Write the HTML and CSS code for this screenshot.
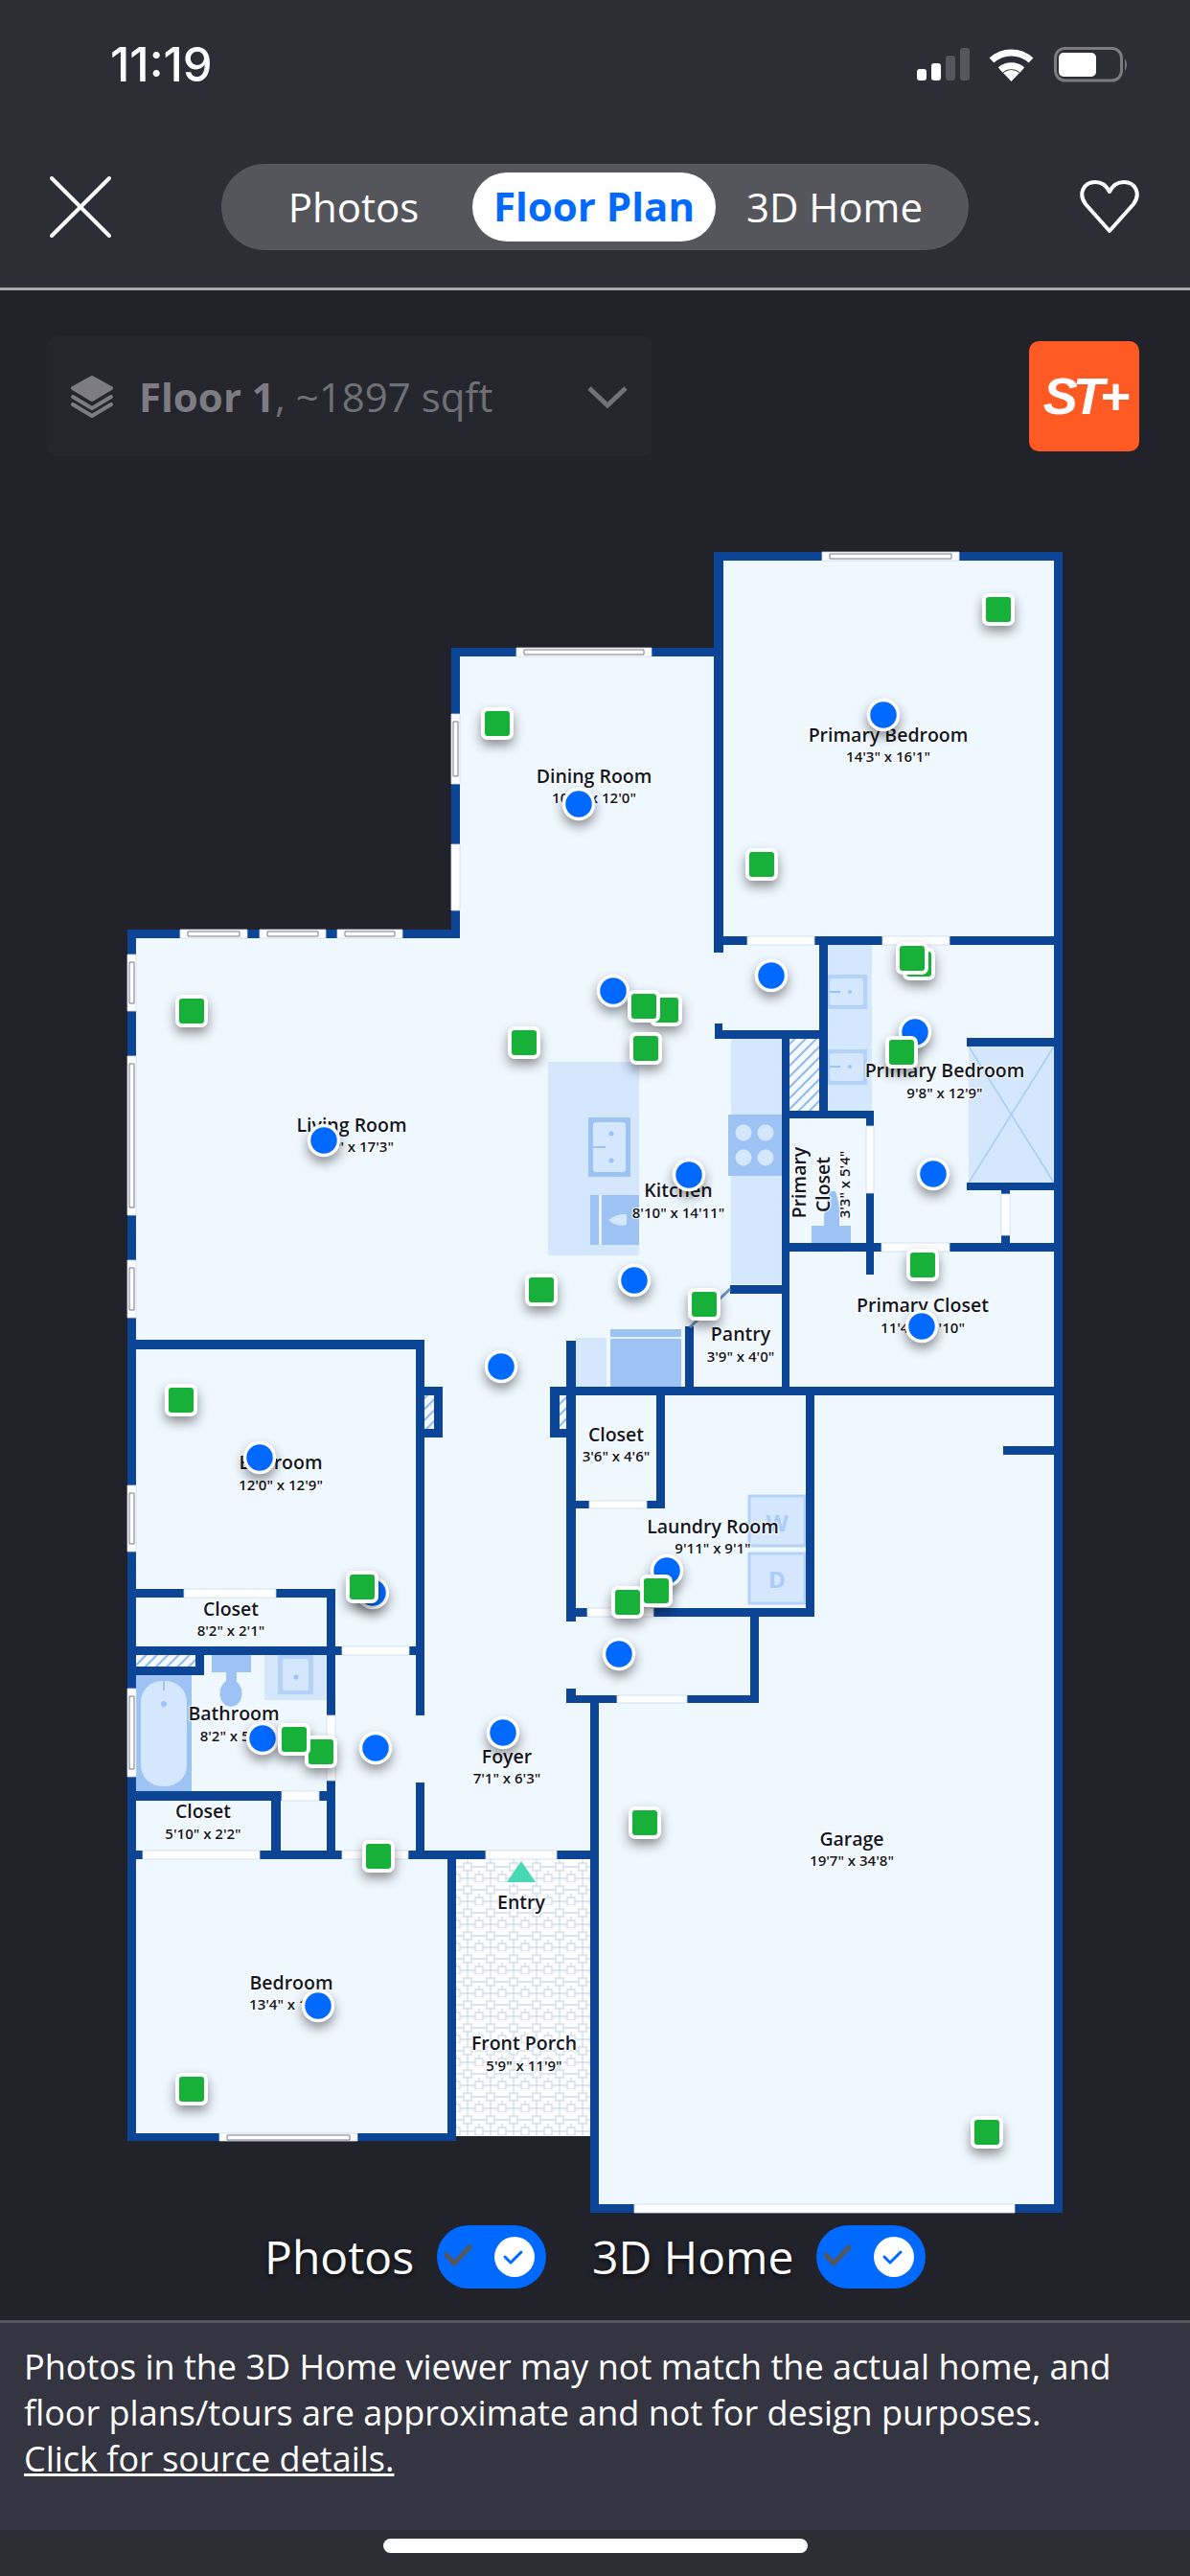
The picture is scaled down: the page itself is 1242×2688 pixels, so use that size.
FILE: index.html
```html
<!DOCTYPE html>
<html lang="en">
<head>
<meta charset="utf-8">
<title>Floor Plan</title>
<link rel="stylesheet" href="styles.css">
</head>
<body>
<div class="screen">
  <header class="top">
    <div class="status">
      <span class="time">11:19</span>
      <svg class="status-icons" width="221" height="40" viewBox="957 48 221 40">
        <rect class="s-on" x="957" y="72" width="10" height="12" rx="3"/>
        <rect class="s-on" x="972" y="66" width="10" height="18" rx="3"/>
        <rect class="s-off" x="987" y="58" width="10" height="26" rx="3"/>
        <rect class="s-off" x="1002" y="50" width="10" height="34" rx="3"/>
        <path class="wifi" d="M1035 63A30 30 0 0 1 1076 63"/>
        <path class="wifi" d="M1044 73A18 18 0 0 1 1067 73"/>
        <path class="s-on" d="M1055.500 85L1047 76Q1055.500 70 1064 76Z"/>
        <rect class="batt" x="1101.500" y="50.500" width="69" height="33.500" rx="10"/>
        <rect class="s-on" x="1105" y="55" width="39" height="25" rx="5"/>
        <path class="batt-cap" d="M1174 61Q1178 67.500 1174 74Z"/>
      </svg>
    </div>
    <nav class="nav">
      <svg class="nav-x" width="64" height="64" viewBox="0 0 64 64"><path d="M2 2L62 62M62 2L2 62"/></svg>
      <div class="seg">
        <span class="seg-item seg-left">Photos</span>
        <span class="seg-active">Floor Plan</span>
        <span class="seg-item seg-right">3D Home</span>
      </div>
      <svg class="nav-heart" width="64" height="58" viewBox="0 0 64 58"><path d="M32 54L7 26C-1 15 5 3 17 3C24 3 29 7 32 13C35 7 40 3 47 3C59 3 65 15 57 26Z"/></svg>
    </nav>
  </header>

  <main class="stage">
    <div class="stage-top">
      <div class="floor-select">
        <svg class="layers" width="46" height="46" viewBox="0 0 46 46">
          <path class="layers-top" d="M23 3L43 14L23 26L3 14Z"/>
          <path class="layers-line" d="M3 23L23 35L43 23"/>
          <path class="layers-line" d="M3 31L23 43L43 31"/>
        </svg>
        <span class="floor-text"><b>Floor 1</b>, ~1897 sqft</span>
        <svg class="floor-chev" width="42" height="24" viewBox="0 0 42 24"><path d="M2 3L21 21L40 3"/></svg>
      </div>
      <div class="badge">ST+</div>
    </div>

    <svg class="plan" width="1000" height="1745" viewBox="120 570 1000 1745">
      <defs>
        <pattern id="hatch" width="8" height="8" patternUnits="userSpaceOnUse" patternTransform="rotate(45)">
          <rect width="8" height="8" fill="#f4f9ff"/>
          <rect width="2" height="8" fill="#8fb8ee"/>
        </pattern>
        <pattern id="tile" x="476" y="1940" width="24" height="24" patternUnits="userSpaceOnUse">
          <rect width="24" height="24" fill="#fff"/>
          <path class="tile-line" d="M8 4H16V12H8ZM-4 16H4V24H-4ZM20 16H28V24H20ZM12 0V4M12 12V24M0 12V16M24 12V16M4 20H20M0 8H8M16 8H24"/>
        </pattern>
      </defs>

      <path class="floor" d="M133 970H471V676H745V576H1109V2309H616V2229H476V2234H133Z"/>
      <rect x="476" y="1940" width="140" height="289" fill="url(#tile)"/>

      <!-- fixtures -->
      <rect class="fx-light" x="572" y="1108" width="95" height="202"/>
      <rect class="fx-light" x="763" y="1084" width="53" height="256"/>
      <rect class="fx-light" x="864" y="986" width="46" height="173"/>
      <rect class="fx-light" x="1011" y="1092" width="89" height="142"/>
      <path class="fx-line" d="M1011 1092L1100 1234M1100 1092L1011 1234"/>
      <rect class="fx-dark" x="760" y="1163" width="56" height="64"/>
      <circle class="fx-hob" cx="776" cy="1182" r="8.500"/>
      <circle class="fx-hob" cx="799" cy="1182" r="8.500"/>
      <circle class="fx-hob" cx="776" cy="1208" r="8.500"/>
      <circle class="fx-hob" cx="799" cy="1208" r="8.500"/>
      <rect class="fx-dark" x="614" y="1166" width="44" height="62"/>
      <rect class="fx-inner" x="619" y="1171" width="34" height="52" rx="3"/>
      <path class="fx-mark" d="M619 1197H632"/>
      <circle class="fx-dot" cx="638" cy="1183" r="2.500"/>
      <circle class="fx-dot" cx="638" cy="1211" r="2.500"/>
      <rect class="fx-dark" x="616" y="1247" width="51" height="52"/>
      <rect class="fx-strip" x="625" y="1247" width="3" height="52"/>
      <path class="fx-inner" d="M635 1273Q644 1266 654 1267V1278Q644 1281 635 1273Z"/>
      <rect class="fx-dark" x="637" y="1387" width="74" height="60"/>
      <rect class="fx-strip" x="637" y="1395" width="74" height="2"/>
      <rect class="fx-light" x="600" y="1396" width="33" height="51"/>
      <rect class="fx-mid" x="864" y="1017" width="41" height="36"/>
      <rect class="fx-inner" x="866" y="1021" width="35" height="28" rx="3"/>
      <circle class="fx-dot" cx="887" cy="1035" r="2"/>
      <path class="fx-mark" d="M866 1035H877"/>
      <rect class="fx-mid" x="864" y="1095" width="41" height="37"/>
      <rect class="fx-inner" x="866" y="1099" width="35" height="29" rx="3"/>
      <circle class="fx-dot" cx="887" cy="1113" r="2"/>
      <path class="fx-mark" d="M866 1113H877"/>
      <path class="fx-dark" d="M847 1297V1279H860V1268Q862 1262 866 1243H872Q878 1262 876 1268V1279H888V1297Z"/>
      <rect class="fx-w" x="782" y="1561" width="58" height="52"/>
      <rect class="fx-w" x="782" y="1621" width="58" height="52"/>
      <text class="fx-letter" x="811" y="1598">W</text>
      <text class="fx-letter" x="811" y="1657">D</text>
      <rect class="fx-dark" x="142" y="1748" width="58" height="121"/>
      <rect class="fx-inner" x="147" y="1754" width="48" height="110" rx="22"/>
      <path class="fx-mark" d="M171 1754V1764"/>
      <circle class="fx-dot" cx="171" cy="1778" r="3"/>
      <rect class="fx-dark" x="221" y="1727" width="41" height="18"/>
      <rect class="fx-dark" x="236" y="1745" width="11" height="12"/>
      <ellipse class="fx-dark" cx="241" cy="1767" rx="11.500" ry="14"/>
      <rect class="fx-light" x="276" y="1727" width="65" height="47"/>
      <rect class="fx-mid" x="290" y="1727" width="37" height="41"/>
      <rect class="fx-inner" x="295" y="1731" width="27" height="33" rx="3"/>
      <circle class="fx-dot" cx="309" cy="1750" r="2.500"/>

      <!-- hatching -->
      <rect x="824" y="1084" width="31" height="75" fill="url(#hatch)"/>
      <rect x="142" y="1727" width="62" height="12" fill="url(#hatch)"/>
      <rect x="443" y="1456" width="10" height="35" fill="url(#hatch)"/>
      <rect x="584" y="1456" width="7" height="36" fill="url(#hatch)"/>

      <!-- walls -->
      <path class="wall" d="M133 970H480V979H133ZM133 970H142V2234H133ZM471 676H480V979H471ZM471 676H755V685H471ZM745 576H755V994H745ZM745 576H1109V585H745ZM1100 576H1109V2309H1100ZM746 977H1105V986H746ZM855 986H864V1161H855ZM746 1075H864V1084H746ZM746 1068H754V1084H746ZM816 1084H824V1456H816ZM816 1159H912V1167H816ZM904 1159H912V1330H904ZM816 1297H1105V1306H816ZM1009 1083H1105V1092H1009ZM1009 1234H1105V1242H1009ZM1045 1242H1054V1297H1045ZM762 1341H816V1350H762ZM715 1384H724V1451H715ZM574 1447H1105V1456H574ZM574 1447H584V1500H574ZM574 1491H601V1500H574ZM591 1399H601V1692H591ZM685 1456H694V1574H685ZM601 1566H694V1574H601ZM841 1451H850V1687H841ZM591 1678H850V1687H591ZM783 1687H792V1777H783ZM591 1769H792V1777H591ZM591 1762H601V1777H591ZM616 1777H625V2309H616ZM1047 1509H1105V1518H1047ZM616 2300H1109V2309H616ZM133 1398H443V1408H133ZM434 1398H443V1790H434ZM443 1447H462V1456H443ZM453 1447H462V1500H453ZM443 1491H462V1500H443ZM142 1658H350V1667H142ZM341 1658H350V1936H341ZM133 1718H443V1727H133ZM133 1739H213V1748H133ZM204 1727H213V1748H204ZM133 1869H350V1879H133ZM283 1879H293V1936H283ZM133 1931H625V1940H133ZM434 1860H443V1940H434ZM467 1931H476V2234H467ZM133 2226H476V2234H133Z"/>
      <path class="door-line" d="M762 1345L720 1385"/>

      <!-- doors -->
      <path class="door" d="M780 977H850V986H780ZM921 977H991V986H921ZM904 1175H912V1245H904ZM920 1297H991V1306H920ZM1045 1246H1054V1289H1045ZM615 1566H675V1574H615ZM613 1678H682V1687H613ZM644 1769H717V1777H644ZM662 2300H1059V2309H662ZM192 1658H288V1667H192ZM341 1790H350V1858H341ZM357 1718H427V1727H357ZM294 1869H333V1879H294ZM149 1931H271V1940H149ZM357 1931H426V1940H357ZM507 1931H581V1940H507ZM471 881H480V950H471Z"/>

      <!-- windows -->
      <path class="door" d="M858 576H1001V585H858ZM539 676H680V685H539ZM188 970H258V979H188ZM271 970H340V979H271ZM352 970H420V979H352ZM229 2226H373V2234H229ZM471 745H480V818H471ZM133 996H142V1055H133ZM133 1102H142V1268H133ZM133 1315H142V1375H133ZM133 1550H142V1619H133ZM133 1762H142V1854H133Z"/>
      <path class="win-line" d="M866 578H993V583H866ZM547 678H672V683H547ZM196 972H250V977H196ZM279 972H332V977H279ZM360 972H412V977H360ZM237 2228H365V2233H237ZM473 753H478V810H473ZM135 1004H140V1047H135ZM135 1110H140V1260H135ZM135 1323H140V1367H135ZM135 1558H140V1611H135ZM135 1770H140V1846H135Z"/>

      <!-- labels -->
      <g class="labels">
        <text class="name" x="927" y="774">Primary Bedroom</text><text class="dim" x="927" y="795">14'3" x 16'1"</text>
        <text class="name" x="620" y="817">Dining Room</text><text class="dim" x="620" y="838">10'7" x 12'0"</text>
        <text class="name" x="367" y="1181">Living Room</text><text class="dim" x="367" y="1202">15'0" x 17'3"</text>
        <text class="name" x="986" y="1124">Primary Bedroom</text><text class="dim" x="986" y="1146">9'8" x 12'9"</text>
        <text class="name" x="708" y="1249">Kitchen</text><text class="dim" x="708" y="1271">8'10" x 14'11"</text>
        <text class="name" x="773" y="1399">Pantry</text><text class="dim" x="773" y="1421">3'9" x 4'0"</text>
        <text class="name" x="963" y="1369">Primary Closet</text><text class="dim" x="963" y="1391">11'4" x 7'10"</text>
        <text class="name" x="293" y="1533">Bedroom</text><text class="dim" x="293" y="1555">12'0" x 12'9"</text>
        <text class="name" x="643" y="1504">Closet</text><text class="dim" x="643" y="1525">3'6" x 4'6"</text>
        <text class="name" x="744" y="1600">Laundry Room</text><text class="dim" x="744" y="1621">9'11" x 9'1"</text>
        <text class="name" x="241" y="1686">Closet</text><text class="dim" x="241" y="1707">8'2" x 2'1"</text>
        <text class="name" x="244" y="1795">Bathroom</text><text class="dim" x="244" y="1817">8'2" x 5'9"</text>
        <text class="name" x="529" y="1840">Foyer</text><text class="dim" x="529" y="1861">7'1" x 6'3"</text>
        <text class="name" x="212" y="1897">Closet</text><text class="dim" x="212" y="1919">5'10" x 2'2"</text>
        <text class="name" x="889" y="1926">Garage</text><text class="dim" x="889" y="1947">19'7" x 34'8"</text>
        <text class="name" x="544" y="1992">Entry</text>
        <text class="name" x="304" y="2076">Bedroom</text><text class="dim" x="304" y="2097">13'4" x 13'6"</text>
        <text class="name" x="547" y="2139">Front Porch</text><text class="dim" x="547" y="2161">5'9" x 11'9"</text>
        <text class="name" x="841" y="1234" transform="rotate(-90 841 1234)">Primary</text>
        <text class="name" x="866" y="1236" transform="rotate(-90 866 1236)">Closet</text>
        <text class="dim" x="887" y="1236" transform="rotate(-90 887 1236)">3'3" x 5'4"</text>
      </g>
      <path class="entry" d="M544 1942L559 1964H529Z"/>

      <!-- blue pins -->
      <g class="pins">
        <circle class="pin-b" cx="922" cy="746" r="15.500"/>
        <circle class="pin-b" cx="604" cy="839" r="15.500"/>
        <circle class="pin-b" cx="640" cy="1034" r="15.500"/>
        <circle class="pin-b" cx="805" cy="1018" r="15.500"/>
        <circle class="pin-b" cx="955" cy="1077" r="15.500"/>
        <circle class="pin-b" cx="338" cy="1190" r="15.500"/>
        <circle class="pin-b" cx="719" cy="1226" r="15.500"/>
        <circle class="pin-b" cx="974" cy="1225" r="15.500"/>
        <circle class="pin-b" cx="662" cy="1336" r="15.500"/>
        <circle class="pin-b" cx="962" cy="1384" r="15.500"/>
        <circle class="pin-b" cx="523" cy="1426" r="15.500"/>
        <circle class="pin-b" cx="271" cy="1521" r="15.500"/>
        <circle class="pin-b" cx="389" cy="1662" r="15.500"/>
        <circle class="pin-b" cx="696" cy="1639" r="15.500"/>
        <circle class="pin-b" cx="646" cy="1726" r="15.500"/>
        <circle class="pin-b" cx="274" cy="1814" r="15.500"/>
        <circle class="pin-b" cx="392" cy="1824" r="15.500"/>
        <circle class="pin-b" cx="525" cy="1808" r="15.500"/>
        <circle class="pin-b" cx="332" cy="2093" r="15.500"/>
      </g>

      <!-- green pins -->
      <g class="pins">
        <rect class="pin-g" x="1027" y="621" width="30" height="30" rx="5"/>
        <rect class="pin-g" x="504" y="740" width="30" height="30" rx="5"/>
        <rect class="pin-g" x="780" y="887" width="30" height="30" rx="5"/>
        <rect class="pin-g" x="185" y="1040" width="30" height="30" rx="5"/>
        <rect class="pin-g" x="532" y="1073" width="30" height="30" rx="5"/>
        <rect class="pin-g" x="680" y="1039" width="30" height="30" rx="5"/>
        <rect class="pin-g" x="657" y="1035" width="30" height="30" rx="5"/>
        <rect class="pin-g" x="659" y="1079" width="30" height="30" rx="5"/>
        <rect class="pin-g" x="550" y="1331" width="30" height="30" rx="5"/>
        <rect class="pin-g" x="720" y="1346" width="30" height="30" rx="5"/>
        <rect class="pin-g" x="944" y="991" width="30" height="30" rx="5"/>
        <rect class="pin-g" x="937" y="985" width="30" height="30" rx="5"/>
        <rect class="pin-g" x="926" y="1083" width="30" height="30" rx="5"/>
        <rect class="pin-g" x="948" y="1305" width="30" height="30" rx="5"/>
        <rect class="pin-g" x="174" y="1446" width="30" height="30" rx="5"/>
        <rect class="pin-g" x="363" y="1641" width="30" height="30" rx="5"/>
        <rect class="pin-g" x="320" y="1813" width="30" height="30" rx="5"/>
        <rect class="pin-g" x="292" y="1800" width="30" height="30" rx="5"/>
        <rect class="pin-g" x="380" y="1922" width="30" height="30" rx="5"/>
        <rect class="pin-g" x="185" y="2165" width="30" height="30" rx="5"/>
        <rect class="pin-g" x="670" y="1645" width="30" height="30" rx="5"/>
        <rect class="pin-g" x="640" y="1657" width="30" height="30" rx="5"/>
        <rect class="pin-g" x="658" y="1887" width="30" height="30" rx="5"/>
        <rect class="pin-g" x="1015" y="2210" width="30" height="30" rx="5"/>
      </g>
    </svg>

    <div class="toggles">
      <span class="toggle-label">Photos</span>
      <span class="toggle">
        <svg width="114" height="66" viewBox="0 0 114 66">
          <path class="check-off" d="M10 31L18 40L34 23"/>
          <circle class="knob" cx="81" cy="33" r="21"/>
          <path class="check-on" d="M71 33L77 39L88 28"/>
        </svg>
      </span>
      <span class="toggle-label toggle-label-2">3D Home</span>
      <span class="toggle">
        <svg width="114" height="66" viewBox="0 0 114 66">
          <path class="check-off" d="M10 31L18 40L34 23"/>
          <circle class="knob" cx="81" cy="33" r="21"/>
          <path class="check-on" d="M71 33L77 39L88 28"/>
        </svg>
      </span>
    </div>
  </main>

  <section class="notice">
    <p class="notice-text">Photos in the 3D Home viewer may not match the actual home, and floor plans/tours are approximate and not for design purposes.<br><a class="notice-link" href="#">Click for source details.</a></p>
  </section>
  <footer class="home-bar"><span class="home-indicator"></span></footer>
</div>
</body>
</html>
```

FILE: styles.css
```css
* { box-sizing: border-box; }
html, body { margin: 0; padding: 0; }
body { background: #21222a; font-family: "Open Sans", "Noto Sans", sans-serif; color: #fff; }
.screen { width: 1242px; height: 2688px; display: flex; flex-direction: column; overflow: hidden; }

/* header */
.top { height: 303px; background: #2c2d35; border-bottom: 3px solid #a9a9ab; flex: none; }
.status { height: 135px; display: flex; align-items: center; justify-content: space-between; padding: 0 64px 0 115px; }
.time { font-family: Inter, "Liberation Sans", sans-serif; font-weight: 500; font-size: 49px; letter-spacing: 0; line-height: 1; }
.status-icons { display: block; }
.s-on { fill: #fff; }
.s-off { fill: #55565d; }
.wifi { fill: none; stroke: #fff; stroke-width: 7; }
.batt { fill: none; stroke: #7b7b80; stroke-width: 3; }
.batt-cap { fill: #7b7b80; }
.nav { margin-top: 36px; height: 90px; display: flex; align-items: center; justify-content: space-between; padding: 0 52px; }
.nav-x path { fill: none; stroke: #fff; stroke-width: 4; stroke-linecap: round; }
.nav-heart path { fill: none; stroke: #fff; stroke-width: 4; stroke-linejoin: round; }
.seg { width: 780px; height: 90px; border-radius: 45px; background: #55555c; display: flex; align-items: center; font-size: 42px; padding-bottom: 2px; }
.seg-item { flex: 1; text-align: center; }
.seg-left { padding-left: 14px; }
.seg-right { padding-right: 16px; }
.seg-active { width: 254px; height: 72px; line-height: 70px; margin-top: 2px; border-radius: 36px; background: #fff; color: #0069ff; font-weight: 700; text-align: center; flex: none; }

/* main stage */
.stage { flex: 1; display: flex; flex-direction: column; background: #21222a; }
.stage-top { display: flex; justify-content: space-between; align-items: flex-start; padding: 48px 53px 0 49px; height: 173px; flex: none; }
.floor-select { width: 632px; height: 125px; border-radius: 10px; background: #25262d; display: flex; align-items: center; padding: 0 26px 0 24px; }
.layers { flex: none; }
.layers-top { fill: #7c7c82; stroke: #7c7c82; stroke-width: 4; stroke-linejoin: round; }
.layers-line { fill: none; stroke: #7c7c82; stroke-width: 4; stroke-linecap: round; stroke-linejoin: round; }
.floor-text { margin-left: 26px; font-size: 42px; color: #6f7076; white-space: nowrap; }
.floor-text b { font-weight: 700; color: #7c7c82; }
.floor-chev { margin-left: auto; }
.floor-chev path { fill: none; stroke: #717277; stroke-width: 5; }
.badge { width: 115px; height: 115px; margin-top: 5px; border-radius: 10px; background: #ff5a24; font-family: "Liberation Sans", sans-serif; font-weight: 700; font-style: italic; font-size: 54px; letter-spacing: -5px; line-height: 115px; text-align: center; }

/* plan */
.plan { display: block; margin-left: 120px; margin-top: 94px; flex: none; }
.floor { fill: #f0f8ff; }
.wall { fill: #0d4596; }
.door { fill: #fff; stroke: #ccd9ea; stroke-width: 0.8; }
.door-line { stroke: #6a8fc4; stroke-width: 3; }
.win-line { fill: #fff; stroke: #77797e; stroke-width: 1; }
.tile-line { fill: none; stroke: #cfddf2; stroke-width: 1.400; }
.fx-light { fill: #d5e7fd; }
.fx-dark { fill: #9dc3f5; }
.fx-mid { fill: #b4d2f9; }
.fx-inner { fill: #d5e7fd; }
.fx-strip { fill: #e6f1fe; }
.fx-hob { fill: #d5e7fd; }
.fx-line { fill: none; stroke: #a8ccf8; stroke-width: 1.500; }
.fx-mark { fill: none; stroke: #9dc3f5; stroke-width: 2; }
.fx-dot { fill: #9dc3f5; }
.fx-w { fill: #d5e7fd; stroke: #b4d2f9; stroke-width: 3; }
.fx-letter { fill: #a9ccf8; font-size: 24px; font-weight: 700; text-anchor: middle; }
.labels text { text-anchor: middle; font-weight: 600; fill: #14171f; paint-order: stroke; stroke: rgba(255, 255, 255, 0.75); stroke-width: 2.500px; stroke-linejoin: round; }
.name { font-size: 19.500px; }
.dim { font-size: 15px; }
.entry { fill: #46d9b3; }
.pins { filter: drop-shadow(0 6px 6px rgba(0, 0, 0, 0.42)); }
.pin-b { fill: #0069ff; stroke: #fff; stroke-width: 3.500; }
.pin-g { fill: #17b13a; stroke: #fff; stroke-width: 4; }

/* toggles */
.toggles { display: flex; align-items: center; padding-left: 276px; margin-top: 7px; height: 66px; flex: none; }
.toggle-label { font-size: 48px; text-shadow: 0 2px 5px rgba(0, 0, 0, 0.7); margin-right: 24px; line-height: 66px; }
.toggle-label-2 { margin-left: 48px; }
.toggle { width: 114px; height: 66px; border-radius: 33px; background: #0069ff; flex: none; }
.toggle svg { display: block; }
.knob { fill: #fff; }
.check-off { fill: none; stroke: #55565d; stroke-width: 5; stroke-linecap: round; stroke-linejoin: round; }
.check-on { fill: none; stroke: #0069ff; stroke-width: 3; stroke-linecap: round; stroke-linejoin: round; }

/* notice */
.notice { height: 219px; flex: none; background: #343541; border-top: 3px solid #55555c; padding: 22px 25px 0; }
.notice-text { margin: 0; font-size: 36px; line-height: 48px; color: #fff; }
.notice-link { color: #fff; text-decoration: underline; }
.home-bar { height: 48px; flex: none; background: #2c2d35; display: flex; justify-content: center; padding-top: 9px; }
.home-indicator { width: 443px; height: 15px; border-radius: 8px; background: #fff; }
```
